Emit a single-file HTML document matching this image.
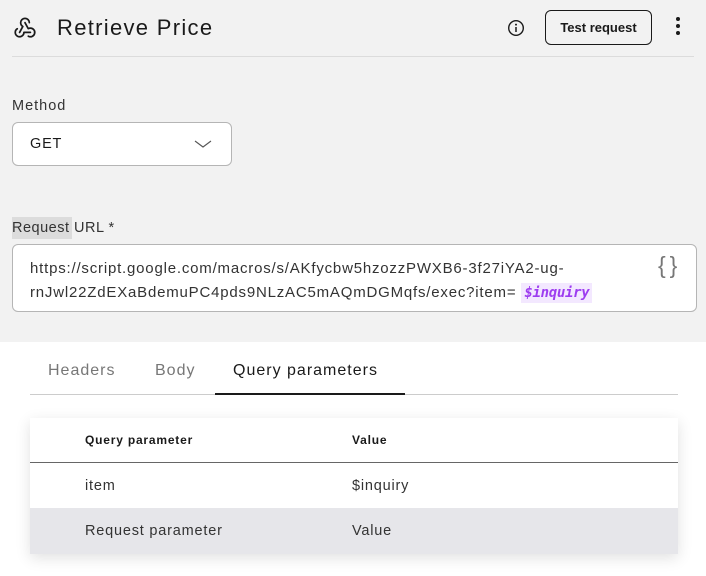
<!DOCTYPE html>
<html><head><meta charset="utf-8"><style>
*{box-sizing:border-box;margin:0;padding:0}
body{width:706px;height:576px;background:#fff;font-family:"Liberation Sans",sans-serif;color:#1a1a1a;position:relative;overflow:hidden}
.top{position:absolute;left:0;top:0;width:706px;height:342px;background:#f2f2f2}
.abs{position:absolute;white-space:nowrap}
</style></head><body>
<div class="top"></div>
<svg class="abs" style="left:12px;top:14px" width="26" height="26" viewBox="0 0 24 24" fill="none" stroke="#1a1a1a" stroke-width="1.6" stroke-linecap="round" stroke-linejoin="round"><path d="M4.876 13.61a4 4 0 1 0 6.124 3.39h6"/><path d="M15.066 20.502a4 4 0 1 0 1.934 -7.502c-.706 0 -1.424 .179 -2 .5l-3 -5.5"/><path d="M16 8a4 4 0 1 0 -8 0c0 1.506 .77 2.818 2 3.5l-3 5.5"/></svg>
<div class="abs" style="left:57px;top:15px;font-size:22px;letter-spacing:1.3px">Retrieve Price</div>
<svg class="abs" style="left:507px;top:19px" width="18" height="18" viewBox="0 0 18 18"><circle cx="9" cy="9" r="7.3" fill="none" stroke="#1a1a1a" stroke-width="1.4"/><circle cx="9" cy="5.6" r="1" fill="#1a1a1a"/><path d="M9 8v5" stroke="#1a1a1a" stroke-width="1.5"/></svg>
<div class="abs" style="left:545px;top:10px;width:107px;height:35px;border:1px solid #1a1a1a;border-radius:6px;font-size:13px;font-weight:bold;line-height:33px;text-align:center;letter-spacing:0px">Test request</div>
<div class="abs" style="left:676px;top:17px;width:4px;height:4px;border-radius:2px;background:#1a1a1a"></div>
<div class="abs" style="left:676px;top:24px;width:4px;height:4px;border-radius:2px;background:#1a1a1a"></div>
<div class="abs" style="left:676px;top:31px;width:4px;height:4px;border-radius:2px;background:#1a1a1a"></div>
<div class="abs" style="left:12px;top:56px;width:682px;height:1px;background:#dcdcdc"></div>
<div class="abs" style="left:12px;top:98px;font-size:14.5px;color:#333;letter-spacing:1px">Method</div>
<div class="abs" style="left:12px;top:122px;width:220px;height:44px;background:#fff;border:1px solid #b5b5b5;border-radius:6px"></div>
<div class="abs" style="left:30px;top:136px;font-size:14.5px;letter-spacing:0.8px">GET</div>
<svg class="abs" style="left:193px;top:139px" width="20" height="10" viewBox="0 0 20 10"><path d="M2 2l8 6 8-6" fill="none" stroke="#555" stroke-width="1.1"/></svg>
<div class="abs" style="left:12px;top:217px;width:60px;height:22px;background:#dcdcdc"></div>
<div class="abs" style="left:12px;top:220px;font-size:14.5px;color:#333;letter-spacing:0.5px">Request URL *</div>
<div class="abs" style="left:12px;top:244px;width:685px;height:68px;background:#fff;border:1px solid #b5b5b5;border-radius:6px"></div>
<div class="abs" style="left:30px;top:257px;font-size:15px;line-height:24px;color:#333;letter-spacing:0.8px">https://script.google.com/macros/s/AKfycbw5hzozzPWXB6-3f27iYA2-ug-<br>rnJwl22ZdEXaBdemuPC4pds9NLzAC5mAQmDGMqfs/exec?item= <span style="background:#f3e8ff;color:#9d3cf0;font-family:'DejaVu Sans Mono',monospace;font-weight:bold;font-style:italic;font-size:14px;padding:2px 3px;letter-spacing:-0.3px">$inquiry</span></div>
<div class="abs" style="left:658px;top:252px;font-size:23px;color:#777;letter-spacing:4px">{}</div>
<div class="abs" style="left:48px;top:362px;font-size:16px;color:#777;letter-spacing:1px">Headers</div>
<div class="abs" style="left:155px;top:362px;font-size:16px;color:#777;letter-spacing:1px">Body</div>
<div class="abs" style="left:233px;top:362px;font-size:16px;color:#1a1a1a;letter-spacing:1px">Query parameters</div>
<div class="abs" style="left:30px;top:394px;width:648px;height:1px;background:#ccc"></div>
<div class="abs" style="left:215px;top:393px;width:190px;height:2px;background:#1a1a1a"></div>
<div class="abs" style="left:30px;top:418px;width:648px;height:136px;background:#fff;box-shadow:0 4px 14px rgba(0,0,0,0.12)"></div>
<div class="abs" style="left:85px;top:433px;font-size:12px;font-weight:bold;letter-spacing:0.8px">Query parameter</div>
<div class="abs" style="left:352px;top:433px;font-size:12px;font-weight:bold;letter-spacing:0.8px">Value</div>
<div class="abs" style="left:30px;top:462px;width:648px;height:1px;background:#666"></div>
<div class="abs" style="left:85px;top:478px;font-size:14.5px;color:#333;letter-spacing:0.8px">item</div>
<div class="abs" style="left:352px;top:478px;font-size:14.5px;color:#333;letter-spacing:0.8px">$inquiry</div>
<div class="abs" style="left:30px;top:508px;width:648px;height:46px;background:#e6e6ea"></div>
<div class="abs" style="left:85px;top:523px;font-size:14.5px;color:#333;letter-spacing:0.8px">Request parameter</div>
<div class="abs" style="left:352px;top:523px;font-size:14.5px;color:#333;letter-spacing:0.8px">Value</div>
</body></html>
